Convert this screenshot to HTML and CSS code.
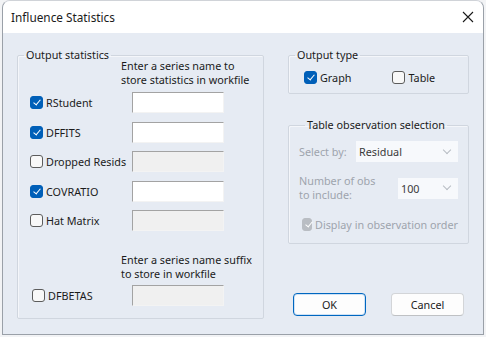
FILE: index.html
```html
<!DOCTYPE html>
<html lang="en">
<head>
    <meta charset="UTF-8">
    <title>Influence Statistics</title>
    <link rel="stylesheet" href="styles.css">
</head>
<body>
    <div class="window">
        <div class="titlebar">
            <span class="title">Influence Statistics</span>
            <svg class="close" width="12" height="12" viewBox="0 0 12 12">
                <path d="M1 1 L11 11 M11 1 L1 11" stroke="#1a1a1a" stroke-width="1.1" fill="none"/>
            </svg>
        </div>

        <div class="content">
            <fieldset class="group stats">
                <legend>Output statistics</legend>
                <p class="hint">Enter a series name to<br>store statistics in workfile</p>
                <div class="rows">
                    <label class="check"><span class="box on"></span>RStudent</label>
                    <span class="field"></span>
                    <label class="check"><span class="box on"></span>DFFITS</label>
                    <span class="field"></span>
                    <label class="check"><span class="box"></span>Dropped Resids</label>
                    <span class="field off"></span>
                    <label class="check"><span class="box on"></span>COVRATIO</label>
                    <span class="field"></span>
                    <label class="check"><span class="box"></span>Hat Matrix</label>
                    <span class="field off"></span>
                </div>
                <p class="hint suffix">Enter a series name suffix<br>to store in workfile</p>
                <div class="rows last">
                    <label class="check"><span class="box"></span>DFBETAS</label>
                    <span class="field off"></span>
                </div>
            </fieldset>

            <div class="side">
                <fieldset class="group type">
                    <legend>Output type</legend>
                    <div class="type-row">
                        <label class="check"><span class="box on"></span>Graph</label>
                        <label class="check"><span class="box"></span>Table</label>
                    </div>
                </fieldset>

                <fieldset class="group obs">
                    <legend>Table observation selection</legend>
                    <div class="line first">
                        <span class="dim">Select by:</span>
                        <span class="combo wide">Residual<span class="chev"></span></span>
                    </div>
                    <div class="line">
                        <span class="dim two">Number of obs<br>to include:</span>
                        <span class="combo narrow">100<span class="chev"></span></span>
                    </div>
                    <label class="check dim"><span class="box on grey"></span>Display in observation order</label>
                </fieldset>

                <div class="buttons">
                    <button class="btn default">OK</button>
                    <button class="btn">Cancel</button>
                </div>
            </div>
        </div>
    </div>
</body>
</html>
```

FILE: styles.css
```css
* {
    box-sizing: border-box;
}
body {
    margin: 0;
    background: #f2f3f5;
    font-family: "Noto Sans", "Open Sans", sans-serif;
    font-size: 10.8px;
    color: #1b1b1b;
}
.window {
    margin-left: 2px;
    width: 482px;
    height: 335px;
    border: 1px solid #9aa0a8;
    border-top-color: #d0d3d8;
    border-radius: 8px 8px 0 0;
    background: #e6ebf3;
    overflow: hidden;
}
.titlebar {
    height: 32px;
    background: #fff;
    display: flex;
    align-items: center;
    justify-content: space-between;
    padding: 0 9px 0 8px;
}
.title {
    font-size: 11.8px;
}
.content {
    display: flex;
    padding: 15px 0 0 14px;
    gap: 24px;
}
.group {
    margin: 0;
    border: 1px solid #d0d6df;
    box-shadow: inset 1px 1px 0 #f4f6fa;
    border-radius: 2px;
    padding: 0;
    min-width: 0;
}
.group legend {
    padding: 0 2px;
    margin-left: 6px;
    line-height: 14px;
}
.stats {
    width: 247px;
    height: 271px;
}
.hint {
    margin: -3px 0 0 103px;
    line-height: 14px;
}
.rows {
    display: grid;
    grid-template-columns: 102px 92px;
    row-gap: 8.5px;
    margin: 5px 0 0 12px;
    align-items: center;
}
.suffix {
    margin-top: 22px;
}
.rows.last {
    margin: 4px 0 0 14px;
    grid-template-columns: 100px 92px;
}
.check {
    display: flex;
    align-items: center;
    white-space: nowrap;
}
.box {
    width: 13px;
    height: 13px;
    border: 1px solid #5c5c5c;
    border-radius: 3px;
    background: #f8f8f8;
    margin-right: 3px;
    position: relative;
}
.box.on {
    background: #005fb8;
    border-color: #005fb8;
}
.box.on::after {
    content: "";
    position: absolute;
    left: 3.5px;
    top: 1px;
    width: 3px;
    height: 6px;
    border: solid #fff;
    border-width: 0 1.3px 1.3px 0;
    transform: rotate(40deg);
}
.box.grey {
    background: #b9bdc3;
    border-color: #b9bdc3;
}
.field {
    height: 21px;
    background: #fff;
    border: 1px solid #f3f3f3;
    border-top-color: #a3a3a3;
    border-left-color: #a3a3a3;
}
.field.off {
    background: #f0f0f0;
}
.side {
    width: 181px;
    display: flex;
    flex-direction: column;
}
.type {
    height: 46px;
}
.type-row {
    display: flex;
    gap: 41px;
    padding: 8px 0 0 15px;
}
.obs {
    margin-top: 24px;
    height: 126px;
    padding: 0 10px 0 10px;
}
.dim {
    color: #9ea4ad;
    line-height: 13px;
}
.dim.two {
    line-height: 14px;
}
.line {
    display: flex;
    align-items: center;
    justify-content: space-between;
    margin-top: 12px;
}
.line.first {
    margin-top: 9px;
}
.combo {
    height: 21px;
    background: #f7f9fc;
    color: #3a3a3a;
    display: flex;
    align-items: center;
    justify-content: space-between;
    padding: 0 8px 0 3px;
}
.wide {
    width: 102px;
}
.narrow {
    width: 60px;
}
.chev {
    width: 6px;
    height: 6px;
    border: solid #b7bcc3;
    border-width: 0 1px 1px 0;
    transform: rotate(45deg);
    margin-top: -4px;
}
.obs .check {
    margin-top: 16px;
    padding-left: 3px;
}
.buttons {
    display: flex;
    justify-content: space-between;
    padding: 0 5px 0 5px;
    margin-top: 49px;
}
.btn {
    width: 73px;
    height: 23px;
    font: inherit;
    color: #1b1b1b;
    background: #fdfdfd;
    border: 1px solid #d3d5d8;
    border-bottom-color: #bfc1c4;
    border-radius: 4px;
}
.btn.default {
    border: 1px solid #0067c0;
    box-shadow: inset 0 0 0 1px #cfe2f5;
}
```
